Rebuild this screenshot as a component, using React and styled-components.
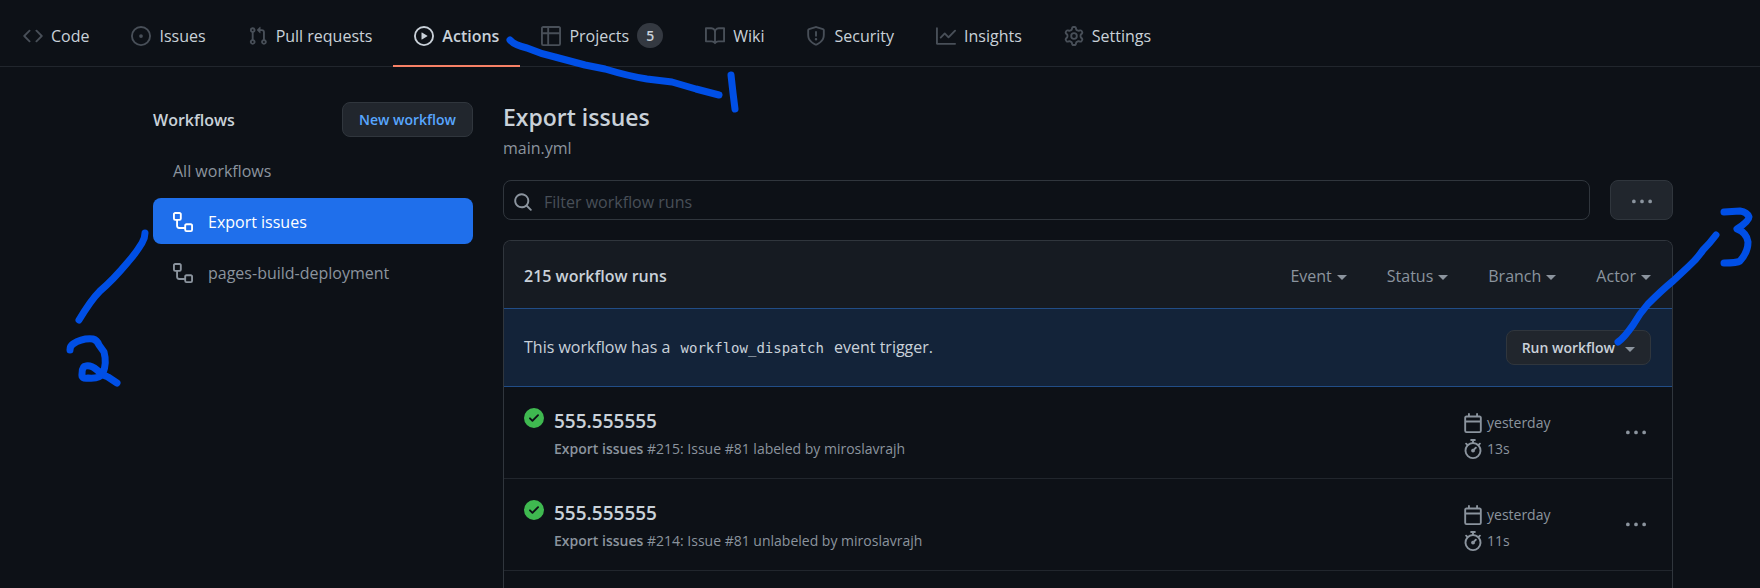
import React from "react";
import styled, { createGlobalStyle } from "styled-components";

const c = {
  bg: "#0d1117",
  panel: "#161b22",
  control: "#21262d",
  line: "#30363d",
  lineSoft: "#21262d",
  text: "#c9d1d9",
  muted: "#8b949e",
  faint: "#484f58",
  link: "#58a6ff",
  accent: "#1f6feb",
  coral: "#f78166",
  green: "#3fb950",
  pen: "#004fe6",
};

const Global = createGlobalStyle`
  *, *::before, *::after { box-sizing: border-box; }
  body {
    margin: 0;
    background: ${c.bg};
    color: ${c.text};
    font-family: "Segoe UI", "Open Sans", "Noto Sans", sans-serif;
    font-size: 16px;
    line-height: 26px;
  }
  button, input { font: inherit; color: inherit; }
  a { color: inherit; text-decoration: none; }
  h1, h2, h3, p, ul { margin: 0; padding: 0; }
  ul { list-style: none; }
`;

const paths = {
  code: "M4.72 3.22a.75.75 0 011.06 1.06L2.06 8l3.72 3.72a.75.75 0 11-1.06 1.06L.47 8.53a.75.75 0 010-1.06l4.25-4.25zm6.56 0a.75.75 0 10-1.06 1.06L13.94 8l-3.72 3.72a.75.75 0 101.06 1.06l4.25-4.25a.75.75 0 000-1.06l-4.25-4.25z",
  issue: "M8 9.5a1.5 1.5 0 100-3 1.5 1.5 0 000 3zM8 0a8 8 0 100 16A8 8 0 008 0zM1.5 8a6.5 6.5 0 1113 0 6.5 6.5 0 01-13 0z",
  pull: "M7.177 3.073L9.573.677A.25.25 0 0110 .854v4.792a.25.25 0 01-.427.177L7.177 3.427a.25.25 0 010-.354zM3.75 2.5a.75.75 0 100 1.5.75.75 0 000-1.5zm-2.25.75a2.25 2.25 0 113 2.122v5.256a2.251 2.251 0 11-1.5 0V5.372A2.25 2.25 0 011.5 3.25zM11 2.5h-1V4h1a1 1 0 011 1v5.628a2.251 2.251 0 101.5 0V5A2.5 2.5 0 0011 2.5zm1 10.25a.75.75 0 111.5 0 .75.75 0 01-1.5 0zM3.75 12a.75.75 0 100 1.5.75.75 0 000-1.5z",
  play: "M1.5 8a6.5 6.5 0 1113 0 6.5 6.5 0 01-13 0zM8 0a8 8 0 100 16A8 8 0 008 0zM6.379 5.227A.25.25 0 006 5.442v5.117a.25.25 0 00.379.214l4.264-2.559a.25.25 0 000-.428L6.379 5.227z",
  table: "M0 1.75C0 .784.784 0 1.75 0h12.5C15.216 0 16 .784 16 1.75v12.5A1.75 1.75 0 0114.25 16H1.75A1.75 1.75 0 010 14.25V1.75zM1.5 6.5v7.75c0 .138.112.25.25.25H5v-8H1.5zM5 5H1.5V1.75a.25.25 0 01.25-.25H5V5zm1.5 1.5v8h7.75a.25.25 0 00.25-.25V6.5h-8zm8-1.5h-8V1.5h7.75a.25.25 0 01.25.25V5z",
  book: "M0 1.75A.75.75 0 01.75 1h4.253c1.227 0 2.317.59 3 1.501A3.744 3.744 0 0111.006 1h4.245a.75.75 0 01.75.75v10.5a.75.75 0 01-.75.75h-4.507a2.25 2.25 0 00-1.591.659l-.622.621a.75.75 0 01-1.06 0l-.622-.621A2.25 2.25 0 005.258 13H.75a.75.75 0 01-.75-.75V1.75zm8.755 3a2.25 2.25 0 012.25-2.25H14.5v9h-3.757c-.71 0-1.4.201-1.992.572l.004-7.322zm-1.504 7.324l.004-5.073-.002-2.253A2.25 2.25 0 005.003 2.5H1.5v9h3.757a3.75 3.75 0 011.994.574z",
  shield: "M7.467.133a1.75 1.75 0 011.066 0l5.25 1.68A1.75 1.75 0 0115 3.48V7c0 1.566-.32 3.182-1.303 4.682-.983 1.498-2.585 2.813-5.032 3.855a1.7 1.7 0 01-1.33 0c-2.447-1.042-4.049-2.357-5.032-3.855C1.32 10.182 1 8.566 1 7V3.48a1.755 1.755 0 011.217-1.667zm.61 1.429a.25.25 0 00-.153 0l-5.25 1.68a.25.25 0 00-.174.238V7c0 1.358.275 2.666 1.057 3.86.784 1.194 2.121 2.34 4.366 3.297a.2.2 0 00.154 0c2.245-.956 3.582-2.104 4.366-3.298C13.225 9.666 13.5 8.36 13.5 7V3.48a.251.251 0 00-.174-.237zM8.75 4.75v3a.75.75 0 01-1.5 0v-3a.75.75 0 011.5 0zM9 10.5a1 1 0 11-2 0 1 1 0 012 0z",
  graph: "M1.5 1.75a.75.75 0 00-1.5 0v12.5c0 .414.336.75.75.75h14.5a.75.75 0 000-1.5H1.5V1.75zm14.28 2.53a.75.75 0 00-1.06-1.06L10 7.94 7.53 5.47a.75.75 0 00-1.06 0L3.22 8.72a.75.75 0 001.06 1.06L7 7.06l2.47 2.47a.75.75 0 001.06 0l5.25-5.25z",
  gear: "M8 0a8.2 8.2 0 0 1 .701.031C9.444.095 9.99.645 10.16 1.29l.288 1.107c.018.066.079.158.212.224.231.114.454.243.668.386.123.082.233.09.299.071l1.103-.303c.644-.176 1.392.021 1.82.63.27.385.506.792.704 1.218.315.675.111 1.422-.364 1.891l-.814.806c-.049.048-.098.147-.088.294.016.257.016.515 0 .772-.01.147.038.246.088.294l.814.806c.475.469.679 1.216.364 1.891a7.977 7.977 0 0 1-.704 1.217c-.428.61-1.176.807-1.82.63l-1.102-.302c-.067-.019-.177-.011-.3.071a5.909 5.909 0 0 1-.668.386c-.133.066-.194.158-.211.224l-.29 1.106c-.168.646-.715 1.196-1.458 1.26a8.006 8.006 0 0 1-1.402 0c-.743-.064-1.289-.614-1.458-1.26l-.289-1.106c-.018-.066-.079-.158-.212-.224a5.738 5.738 0 0 1-.668-.386c-.123-.082-.233-.09-.299-.071l-1.103.303c-.644.176-1.392-.021-1.82-.63a8.12 8.12 0 0 1-.704-1.218c-.315-.675-.111-1.422.363-1.891l.815-.806c.05-.048.098-.147.088-.294a6.214 6.214 0 0 1 0-.772c.01-.147-.038-.246-.088-.294l-.815-.806C.635 6.045.431 5.298.746 4.623a7.92 7.92 0 0 1 .704-1.217c.428-.61 1.176-.807 1.82-.63l1.102.302c.067.019.177.011.3-.071.214-.143.437-.272.668-.386.133-.066.194-.158.211-.224l.29-1.106C6.009.645 6.556.095 7.299.03 7.53.01 7.764 0 8 0Zm-.571 1.525c-.036.003-.108.036-.137.146l-.289 1.105c-.147.561-.549.967-.998 1.189-.173.086-.34.183-.5.29-.417.278-.97.423-1.529.27l-1.103-.303c-.109-.03-.175.016-.195.045-.22.312-.412.644-.573.99-.014.031-.021.11.059.19l.815.806c.411.406.562.957.53 1.456a4.709 4.709 0 0 0 0 .582c.032.499-.119 1.05-.53 1.456l-.815.806c-.081.08-.073.159-.059.19.162.346.353.677.573.989.02.03.085.076.195.046l1.102-.303c.56-.153 1.113-.008 1.53.27.161.107.328.204.501.29.447.222.85.629.997 1.189l.289 1.105c.029.109.101.143.137.146a6.6 6.6 0 0 0 1.142 0c.036-.003.108-.036.137-.146l.289-1.105c.147-.561.549-.967.998-1.189.173-.086.34-.183.5-.29.417-.278.97-.423 1.529-.27l1.103.303c.109.029.175-.016.195-.045.22-.313.411-.644.573-.99.014-.031.021-.11-.059-.19l-.815-.806c-.411-.406-.562-.957-.53-1.456a4.709 4.709 0 0 0 0-.582c-.032-.499.119-1.05.53-1.456l.815-.806c.081-.08.073-.159.059-.19a6.464 6.464 0 0 0-.573-.989c-.02-.03-.085-.076-.195-.046l-1.102.303c-.56.153-1.113.008-1.53-.27a4.44 4.44 0 0 0-.501-.29c-.447-.222-.85-.629-.997-1.189l-.289-1.105c-.029-.11-.101-.143-.137-.146a6.6 6.6 0 0 0-1.142 0ZM11 8a3 3 0 1 1-6 0 3 3 0 0 1 6 0ZM9.5 8a1.5 1.5 0 1 0-3.001.001A1.5 1.5 0 0 0 9.5 8Z",
  workflow: "M0 1.75C0 .784.784 0 1.75 0h3.5C6.216 0 7 .784 7 1.75v3.5A1.75 1.75 0 015.25 7H4v4a1 1 0 001 1h4v-1.25C9 9.784 9.784 9 10.75 9h3.5c.966 0 1.75.784 1.75 1.75v3.5A1.75 1.75 0 0114.25 16h-3.5A1.75 1.75 0 019 14.25v-.75H5A2.5 2.5 0 012.5 11V7h-.75A1.75 1.75 0 010 5.25zm1.75-.25a.25.25 0 00-.25.25v3.5c0 .138.112.25.25.25h3.5a.25.25 0 00.25-.25v-3.5a.25.25 0 00-.25-.25zm9 9a.25.25 0 00-.25.25v3.5c0 .138.112.25.25.25h3.5a.25.25 0 00.25-.25v-3.5a.25.25 0 00-.25-.25z",
  search: "M11.5 7a4.499 4.499 0 11-8.998 0A4.499 4.499 0 0111.5 7zm-.82 4.74a6 6 0 111.06-1.06l3.04 3.04a.75.75 0 11-1.06 1.06l-3.04-3.04z",
  kebab: "M8 9a1.5 1.5 0 100-3 1.5 1.5 0 000 3zM1.5 9a1.5 1.5 0 100-3 1.5 1.5 0 000 3zm13 0a1.5 1.5 0 100-3 1.5 1.5 0 000 3z",
  check: "M8 16A8 8 0 108 0a8 8 0 000 16zm3.78-9.72a.75.75 0 00-1.06-1.06L6.75 9.19 5.28 7.72a.75.75 0 00-1.06 1.06l2 2a.75.75 0 001.06 0l4.5-4.5z",
  calendar: "M4.75 0a.75.75 0 01.75.75V2h5V.75a.75.75 0 011.5 0V2h1.25c.966 0 1.75.784 1.75 1.75v10.5A1.75 1.75 0 0113.25 16H2.75A1.75 1.75 0 011 14.25V3.75C1 2.784 1.784 2 2.75 2H4V.75A.75.75 0 014.75 0zm0 3.5h-2a.25.25 0 00-.25.25V6h11V3.75a.25.25 0 00-.25-.25H4.75zM2.5 7.5v6.75c0 .138.112.25.25.25h10.5a.25.25 0 00.25-.25V7.5h-11z",
  stopwatch: "M5.75.75A.75.75 0 016.5 0h3a.75.75 0 010 1.5h-.75v1l-.001.041a6.718 6.718 0 013.464 1.435l.007-.006.75-.75a.75.75 0 111.06 1.06l-.75.75-.006.007a6.75 6.75 0 11-10.548 0L2.72 5.03l-.75-.75a.75.75 0 011.06-1.06l.75.75.007.006A6.718 6.718 0 017.25 2.541a.756.756 0 010-.041v-1H6.5a.75.75 0 01-.75-.75zM8 14.5A5.25 5.25 0 108 4a5.25 5.25 0 000 10.5zm.389-6.7l1.33-1.33a.75.75 0 111.061 1.06L9.45 8.861A1.502 1.502 0 018 10.75a1.5 1.5 0 11.389-2.95z",
};

const IconSvg = styled.svg`
  flex: none;
  display: block;
  width: 20px;
  height: 20px;
  fill: ${(p) => p.$color || "currentColor"};
`;

const Icon = ({ name, color }) => (
  <IconSvg viewBox="0 0 16 16" aria-hidden="true" $color={color}>
    <path fillRule="evenodd" d={paths[name]} />
  </IconSvg>
);

const Page = styled.div`
  position: relative;
  display: flex;
  flex-direction: column;
  min-height: 100vh;
  overflow: hidden;
`;

const TabBar = styled.nav`
  display: flex;
  height: 67px;
  padding-left: 2px;
  border-bottom: 1px solid ${c.lineSoft};
`;

const Tab = styled.a`
  display: flex;
  align-items: center;
  gap: 8px;
  height: 67px;
  padding: 4px 21px 0;
  white-space: nowrap;
  font-weight: ${(p) => (p.$active ? 600 : 400)};
  box-shadow: ${(p) => (p.$active ? `inset 0 -2px ${c.coral}` : "none")};
`;

const Counter = styled.span`
  min-width: 26px;
  padding: 0 8px;
  border-radius: 13px;
  background: #343941;
  font-size: 14px;
  font-weight: 600;
  line-height: 25px;
  text-align: center;
`;

const Layout = styled.div`
  flex: 1;
  display: grid;
  grid-template-columns: 320px minmax(0, 1fr);
  gap: 30px;
  padding: 35px 87px 0 153px;
`;

const SidebarHead = styled.div`
  display: flex;
  align-items: center;
  justify-content: space-between;
  margin-bottom: 10px;
`;

const SidebarTitle = styled.h2`
  font-size: 16px;
  font-weight: 600;
`;

const ButtonLink = styled.a`
  height: 35px;
  padding: 0 16px;
  border: 1px solid ${c.line};
  border-radius: 8px;
  background: ${c.control};
  color: ${c.link};
  font-size: 14px;
  font-weight: 600;
  line-height: 33px;
`;

const SideList = styled.ul`
  display: grid;
  gap: 5px;
`;

const SideLink = styled.a`
  display: flex;
  align-items: center;
  gap: 15px;
  height: 46px;
  padding: 2px 20px 0;
  border-radius: 8px;
  background: ${(p) => (p.$active ? c.accent : "transparent")};
  color: ${(p) => (p.$active ? "#ffffff" : c.muted)};
`;

const Main = styled.main`
  display: flex;
  flex-direction: column;
`;

const Title = styled.h1`
  font-size: 23px;
  font-weight: 600;
  line-height: 30px;
`;

const FileLink = styled.a`
  align-self: flex-start;
  color: ${c.muted};
  line-height: 32px;
`;

const FilterBar = styled.div`
  display: flex;
  gap: 20px;
  margin: 16px 0 20px;
`;

const SearchBox = styled.label`
  flex: 1;
  display: flex;
  align-items: center;
  gap: 11px;
  height: 40px;
  padding: 4px 9px 0;
  border: 1px solid ${c.line};
  border-radius: 8px;
  color: ${c.muted};
`;

const SearchInput = styled.input`
  flex: 1;
  min-width: 0;
  padding: 0;
  border: 0;
  outline: 0;
  background: transparent;
  &::placeholder { color: ${c.faint}; opacity: 1; }
`;

const MenuButton = styled.button`
  display: grid;
  place-items: center;
  width: 63px;
  height: 40px;
  padding: 3px 0 0;
  border: 1px solid ${c.line};
  border-radius: 8px;
  background: ${c.control};
  color: ${c.muted};
`;

const RunsBox = styled.section`
  flex: 1;
  border: 1px solid ${c.line};
  border-bottom: 0;
  border-radius: 8px 8px 0 0;
  overflow: hidden;
`;

const RunsHead = styled.header`
  display: flex;
  align-items: center;
  justify-content: space-between;
  height: 67px;
  padding: 2px 21px 0 20px;
  background: ${c.panel};
`;

const RunsCount = styled.h2`
  font-size: 16px;
  font-weight: 600;
`;

const Filters = styled.div`
  display: flex;
  gap: 40px;
`;

const FilterButton = styled.button`
  display: flex;
  align-items: center;
  gap: 5px;
  padding: 0;
  border: 0;
  background: transparent;
  color: ${c.muted};
`;

const Caret = styled.span`
  margin-top: 3px;
  border: 5px solid transparent;
  border-top-color: ${c.muted};
  border-bottom: 0;
`;

const Dispatch = styled.div`
  display: flex;
  align-items: center;
  justify-content: space-between;
  height: 79px;
  padding: 0 21px 0 20px;
  border: solid rgba(56, 139, 253, 0.4);
  border-width: 1px 0;
  background: rgba(56, 139, 253, 0.15);
`;

const Code = styled.code`
  padding: 0 6px;
  font-family: Consolas, "DejaVu Sans Mono", monospace;
  font-size: 14px;
`;

const RunButton = styled.button`
  display: flex;
  align-items: center;
  gap: 10px;
  height: 35px;
  padding: 0 15px;
  border: 1px solid ${c.line};
  border-radius: 8px;
  background: ${c.control};
  font-size: 14px;
  font-weight: 600;
`;

const RunItem = styled.li`
  display: grid;
  grid-template-columns: 20px minmax(0, 1fr) 143px 60px;
  align-items: start;
  height: 92px;
  padding: 21px 6px 0 20px;
  border-bottom: 1px solid ${c.lineSoft};
`;

const RunText = styled.div`
  padding-left: 10px;
`;

const RunTitle = styled.h3`
  font-size: 19px;
  font-weight: 600;
  line-height: 26px;
`;

const RunInfo = styled.p`
  color: ${c.muted};
  font-size: 14px;
  line-height: 30px;
  b { font-weight: 600; }
`;

const RunMeta = styled.ul`
  padding-top: 2px;
  color: ${c.muted};
  font-size: 14px;
`;

const MetaLine = styled.li`
  display: flex;
  align-items: center;
  gap: 4px;
`;

const RowMenu = styled.button`
  display: grid;
  place-items: center;
  width: 60px;
  height: 50px;
  padding: 0;
  border: 0;
  background: transparent;
  color: ${c.muted};
`;

const Pen = styled.svg`
  position: absolute;
  top: 0;
  left: 0;
  width: 1760px;
  height: 588px;
  pointer-events: none;
  fill: none;
  stroke: ${c.pen};
  stroke-width: 7px;
  stroke-linecap: round;
  stroke-linejoin: round;
`;

const tabs = [
  ["code", "Code"],
  ["issue", "Issues"],
  ["pull", "Pull requests"],
  ["play", "Actions"],
  ["table", "Projects", 5],
  ["book", "Wiki"],
  ["shield", "Security"],
  ["graph", "Insights"],
  ["gear", "Settings"],
];

const workflows = ["Export issues", "pages-build-deployment"];

const runs = [
  { id: 215, action: "labeled", time: "13s" },
  { id: 214, action: "unlabeled", time: "11s" },
];

export default function App() {
  return (
    <Page>
      <Global />
      <TabBar aria-label="Repository">
        {tabs.map(([icon, label, count]) => {
          const active = label === "Actions";
          return (
            <Tab key={label} href="#" $active={active} aria-current={active ? "page" : undefined}>
              <Icon name={icon} color={active ? c.text : c.faint} />
              {label}
              {count && <Counter>{count}</Counter>}
            </Tab>
          );
        })}
      </TabBar>

      <Layout>
        <aside>
          <SidebarHead>
            <SidebarTitle>Workflows</SidebarTitle>
            <ButtonLink href="#">New workflow</ButtonLink>
          </SidebarHead>
          <SideList>
            <li>
              <SideLink href="#">All workflows</SideLink>
            </li>
            {workflows.map((name, i) => (
              <li key={name}>
                <SideLink href="#" $active={i === 0}>
                  <Icon name="workflow" />
                  {name}
                </SideLink>
              </li>
            ))}
          </SideList>
        </aside>

        <Main>
          <Title>Export issues</Title>
          <FileLink href="#">main.yml</FileLink>
          <FilterBar>
            <SearchBox>
              <Icon name="search" />
              <SearchInput type="text" aria-label="Filter workflow runs" placeholder="Filter workflow runs" />
            </SearchBox>
            <MenuButton type="button" aria-label="More options">
              <Icon name="kebab" />
            </MenuButton>
          </FilterBar>

          <RunsBox>
            <RunsHead>
              <RunsCount>215 workflow runs</RunsCount>
              <Filters>
                {["Event", "Status", "Branch", "Actor"].map((name) => (
                  <FilterButton key={name} type="button">
                    {name}
                    <Caret />
                  </FilterButton>
                ))}
              </Filters>
            </RunsHead>
            <Dispatch>
              <p>
                This workflow has a <Code>workflow_dispatch</Code> event trigger.
              </p>
              <RunButton type="button">
                Run workflow
                <Caret />
              </RunButton>
            </Dispatch>
            <ul>
              {runs.map((run) => (
                <RunItem key={run.id}>
                  <Icon name="check" color={c.green} />
                  <RunText>
                    <RunTitle>
                      <a href="#">555.555555</a>
                    </RunTitle>
                    <RunInfo>
                      <b>Export issues</b> #{run.id}: Issue #81 {run.action} by miroslavrajh
                    </RunInfo>
                  </RunText>
                  <RunMeta>
                    <MetaLine>
                      <Icon name="calendar" />
                      yesterday
                    </MetaLine>
                    <MetaLine>
                      <Icon name="stopwatch" />
                      {run.time}
                    </MetaLine>
                  </RunMeta>
                  <RowMenu type="button" aria-label="Run options">
                    <Icon name="kebab" />
                  </RowMenu>
                </RunItem>
              ))}
            </ul>
          </RunsBox>
        </Main>
      </Layout>

      <Pen viewBox="0 0 1760 588" aria-hidden="true">
        <path d="M510 40Q514 45 527 48Q541 54 555 57Q570 61 585 65L605 69Q628 76 647 79L672 82L696 89L719 95" />
        <path d="M731 75L733 93L735 109" />
        <path d="M145 233Q145 238 142 243Q136 253 128 262Q113 280 100 291Q91 300 79 320" />
        <path d="M70 350Q70 346 73 344Q82 338 93 339Q97 340 99 345L104 352Q107 363 103 373Q100 379 88 378Q81 379 82 374Q82 366 86 366Q91 365 97 370Q102 375 108 377L117 383" />
        <path d="M1716 235Q1710 243 1703 250Q1697 259 1688 267L1673 281Q1662 290 1648 304Q1640 313 1633 325Q1624 338 1618 342" />
        <path d="M1724 212L1740 211Q1747 212 1749 217Q1749 221 1737 229Q1747 233 1748 242Q1748 252 1740 261Q1737 263 1724 263" />
      </Pen>
    </Page>
  );
}
